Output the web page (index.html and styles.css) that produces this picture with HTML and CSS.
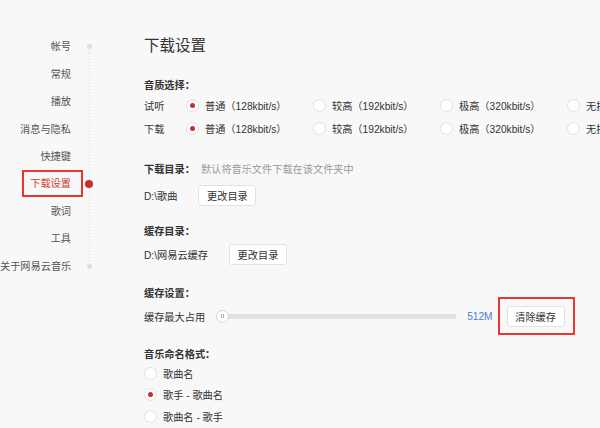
FILE: index.html
```html
<!DOCTYPE html>
<html>
<head>
    <title>设置</title>
    <link rel="stylesheet" href="styles.css">
</head>
<body>
    <div class="page">
        <ul class="nav">
            <li class="nav-item"><span class="nav-label">帐号</span><span class="nav-mark"><i class="dot"></i></span></li>
            <li class="nav-item"><span class="nav-label">常规</span><span class="nav-mark"></span></li>
            <li class="nav-item"><span class="nav-label">播放</span><span class="nav-mark"></span></li>
            <li class="nav-item"><span class="nav-label">消息与隐私</span><span class="nav-mark"></span></li>
            <li class="nav-item"><span class="nav-label">快捷键</span><span class="nav-mark"></span></li>
            <li class="nav-item active"><span class="nav-label"><span class="mark-box">下载设置</span></span><span class="nav-mark"><i class="dot red"></i></span></li>
            <li class="nav-item"><span class="nav-label">歌词</span><span class="nav-mark"></span></li>
            <li class="nav-item"><span class="nav-label">工具</span><span class="nav-mark"></span></li>
            <li class="nav-item"><span class="nav-label">关于网易云音乐</span><span class="nav-mark"><i class="dot"></i></span></li>
        </ul>

        <div class="main">
            <h1>下载设置</h1>

            <div class="section quality">
                <div class="label">音质选择：</div>
                <div class="row">
                    <span class="row-name">试听</span>
                    <span class="option"><i class="radio checked"></i>普通（128kbit/s）</span>
                    <span class="option"><i class="radio"></i>较高（192kbit/s）</span>
                    <span class="option"><i class="radio"></i>极高（320kbit/s）</span>
                    <span class="option"><i class="radio"></i>无损（SQ）</span>
                </div>
                <div class="row">
                    <span class="row-name">下载</span>
                    <span class="option"><i class="radio checked"></i>普通（128kbit/s）</span>
                    <span class="option"><i class="radio"></i>较高（192kbit/s）</span>
                    <span class="option"><i class="radio"></i>极高（320kbit/s）</span>
                    <span class="option"><i class="radio"></i>无损（SQ）</span>
                </div>
            </div>

            <div class="section download-dir">
                <div class="label">下载目录：<span class="hint">默认将音乐文件下载在该文件夹中</span></div>
                <div class="row dir-row">
                    <span class="path">D:\歌曲</span>
                    <button class="btn">更改目录</button>
                </div>
            </div>

            <div class="section cache-dir">
                <div class="label">缓存目录：</div>
                <div class="row dir-row">
                    <span class="path">D:\网易云缓存</span>
                    <button class="btn">更改目录</button>
                </div>
            </div>

            <div class="section cache">
                <div class="label">缓存设置：</div>
                <div class="row">
                    <span>缓存最大占用</span>
                    <div class="slider"><span class="thumb"></span></div>
                    <span class="size">512M</span>
                    <div class="btn-box"><button class="btn">清除缓存</button></div>
                </div>
            </div>

            <div class="section naming">
                <div class="label">音乐命名格式：</div>
                <div class="name-row"><i class="radio"></i>歌曲名</div>
                <div class="name-row"><i class="radio checked"></i>歌手 - 歌曲名</div>
                <div class="name-row"><i class="radio"></i>歌曲名 - 歌手</div>
            </div>
        </div>
    </div>
</body>
</html>
```

FILE: styles.css
```css
html,
body {
    margin: 0;
    padding: 0;
    overflow: hidden;
}

body {
    font-family: "Liberation Sans", "Noto Sans CJK SC", sans-serif;
    font-size: 10.2px;
    color: #333;
    background-color: #f8f8f8;
}

.page {
    display: flex;
    width: 600px;
    height: 428px;
}

/* left menu */
.nav {
    list-style: none;
    margin: 0;
    padding: 0;
    margin-top: 33.3px;
    width: 107px;
    flex-shrink: 0;
    align-self: flex-start;
    background: repeating-linear-gradient(to bottom, #d8d8d8 0 1px, transparent 1px 3px) no-repeat;
    background-size: 1px calc(100% - 27.4px);
    background-position: 89px 13.7px;
}

.nav-item {
    display: flex;
    align-items: center;
    height: 27.4px;
    color: #555;
}

.nav-label {
    width: 71px;
    text-align: right;
    white-space: nowrap;
    line-height: 15px;
}

.nav-mark {
    width: 36px;
    display: flex;
    justify-content: center;
}

.dot {
    display: block;
    width: 5px;
    height: 5px;
    border-radius: 50%;
    background-color: #dedede;
}

.dot.red {
    width: 8px;
    height: 8px;
    background-color: #c62f2f;
}

.active .nav-label {
    color: #d33a31;
}

.mark-box {
    display: inline-block;
    border: 2px solid #ee3333;
    padding: 4px 10px 4px 6px;
    margin: -6px -12px -6px -8px;
}

/* content */
.main {
    flex: 1;
    padding-left: 37px;
    white-space: nowrap;
}

h1 {
    font-size: 15.5px;
    font-weight: normal;
    line-height: 20px;
    margin: 36px 0 0;
    color: #333;
}

.label {
    font-weight: bold;
    line-height: 16px;
    color: #333;
}

.hint {
    font-weight: normal;
    color: #999;
    margin-left: 6px;
}

.row {
    display: flex;
    align-items: center;
    height: 23px;
}

.quality {
    margin-top: 22px;
}

.row-name {
    width: 42px;
    flex-shrink: 0;
}

.option {
    display: flex;
    align-items: center;
    width: 127px;
    flex-shrink: 0;
}

.radio {
    display: flex;
    align-items: center;
    justify-content: center;
    width: 13px;
    height: 13px;
    box-sizing: border-box;
    border: 1px solid #e0e0e0;
    border-radius: 50%;
    background-color: #fff;
    margin-right: 6px;
    flex-shrink: 0;
}

.radio.checked::after {
    content: "";
    width: 5px;
    height: 5px;
    border-radius: 50%;
    background-color: #c62f2f;
}

.download-dir {
    margin-top: 22px;
}

.download-dir .dir-row {
    margin-top: 6px;
}

.cache-dir {
    margin-top: 18px;
}

.cache-dir .dir-row {
    margin-top: 3px;
}

.dir-row {
    height: 22px;
}

.btn {
    font-family: inherit;
    font-size: 10.2px;
    color: #333;
    width: 58px;
    height: 21px;
    padding: 0;
    margin-left: 21px;
    background-color: #fff;
    border: 1px solid #e3e3e3;
    border-radius: 3px;
    cursor: pointer;
}

.cache {
    margin-top: 21px;
}

.cache .row {
    margin-top: 3px;
    height: 22px;
}

.slider {
    display: flex;
    align-items: center;
    width: 240px;
    height: 13px;
    margin-left: 11px;
    background: linear-gradient(#e1e1e1, #e1e1e1) center / 100% 5px no-repeat;
}

.thumb {
    display: flex;
    align-items: center;
    justify-content: center;
    width: 13px;
    height: 13px;
    box-sizing: border-box;
    border: 1px solid #d6d6d6;
    border-radius: 50%;
    background-color: #fff;
}

.thumb::before {
    content: "";
    width: 1px;
    height: 4px;
    border-left: 1px solid #aaa;
    border-right: 1px solid #aaa;
}

.size {
    color: #4a80cf;
    margin-left: 11px;
}

.btn-box {
    display: flex;
    border: 2px solid #ee3333;
    padding: 7px 8px 6px 7px;
    margin: -9px 0 -8px 5px;
}

.btn-box .btn {
    margin-left: 0;
}

.naming {
    margin-top: 20px;
}

.name-row {
    display: flex;
    align-items: center;
    height: 21.3px;
}
```
